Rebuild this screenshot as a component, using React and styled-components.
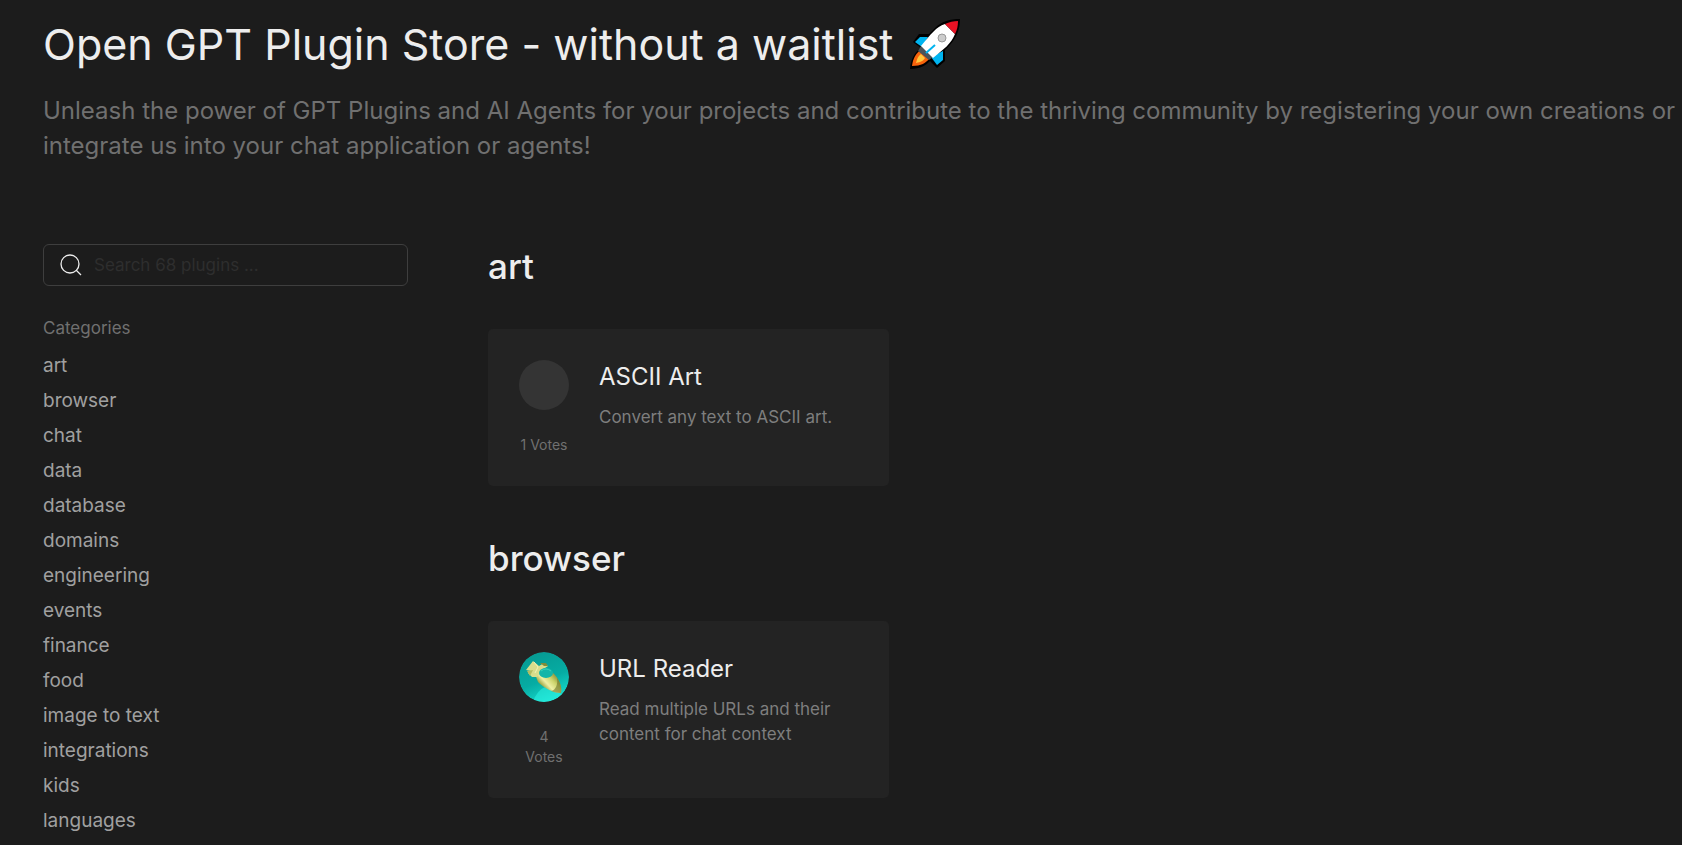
import React, { useState } from 'react'
import styled, { createGlobalStyle } from 'styled-components'

const categories = [
  'art',
  'browser',
  'chat',
  'data',
  'database',
  'domains',
  'engineering',
  'events',
  'finance',
  'food',
  'image to text',
  'integrations',
  'kids',
  'languages',
]

const sections = [
  {
    category: 'art',
    plugins: [{ name: 'ASCII Art', description: 'Convert any text to ASCII art.', votes: 1 }],
  },
  {
    category: 'browser',
    plugins: [
      {
        name: 'URL Reader',
        description: 'Read multiple URLs and their content for chat context',
        votes: 4,
        logo: true,
      },
    ],
  },
]

function RocketIcon() {
  return (
    <Rocket viewBox='0 0 52 52' role='img' aria-label='rocket'>
      <path
        d='M51 1C41 1 33 3 26 10L20 16H10L4 24L12 30C8 33 2 38 1 51C12 51 17 47 21 43L28 50L36 43V32L40 28C48 19 51 11 51 1Z'
        fill='#000'
      />
      <path d='M19 19H11L6 24L13 29ZM34 33V42L28 47L22 39Z' fill='#00b4f0' />
      <path d='M13 31C7 35 4 40 3 48C12 48 17 45 21 40Z' fill='#f7630c' />
      <path d='M12 36C9 38 8 41 7 45C12 44 14 43 16 40Z' fill='#ffc83d' />
      <path d='M12 28L24 39L20 42L9 33Z' fill='#4a5459' />
      <path d='M36 6C27 9 22 16 12 28L24 40C35 31 42 26 46 16Z' fill='#fff' />
      <path d='M36 6C40 4 45 3 49 3C49 8 48 12 46 16Z' fill='#e81224' />
      <circle cx='33' cy='20' r='4' fill='#ccc' stroke='#999' />
      <path d='M17 35L26 27' stroke='#00b4f0' strokeWidth='2' />
    </Rocket>
  )
}

function SearchIcon() {
  return (
    <Magnifier viewBox='0 0 22 22' aria-hidden='true'>
      <circle cx='10' cy='10' r='9' />
      <path d='M16 16L21 21' />
    </Magnifier>
  )
}

function ReaderLogo() {
  return (
    <svg viewBox='0 0 50 50' width='50' height='50' aria-hidden='true'>
      <defs>
        <linearGradient id='sea' x1='.3' y1='0' x2='.7' y2='1'>
          <stop offset='0' stopColor='#069a92' />
          <stop offset='.55' stopColor='#06aca3' />
          <stop offset='1' stopColor='#18e0d2' />
        </linearGradient>
        <linearGradient id='hull' gradientUnits='userSpaceOnUse' x1='38' y1='24' x2='25' y2='36'>
          <stop offset='0' stopColor='#8d9238' />
          <stop offset='.35' stopColor='#cdd46c' />
          <stop offset='.7' stopColor='#eef0a6' />
          <stop offset='1' stopColor='#9da646' />
        </linearGradient>
      </defs>
      <circle cx='25' cy='25' r='25' fill='url(#sea)' />
      <path d='M14 50Q18 38 26 35L43 42Q34 50 25 50Z' fill='#2ff8e8' opacity='.5' />
      <path d='M16 22C22 17 31 17 36 23C41 29 43 35 42 41C34 41 25 36 19 30Z' fill='url(#hull)' />
      <path d='M38 26C42 31 43 37 42 41C38 41 35 40 32 39C37 38 39 32 38 26Z' fill='#6e7329' opacity='.6' />
      <path d='M14 9L20 14L25 11L29 14L23 18L18 25L13 25L9 21L12 19L7 18Z' fill='#d8dd8c' />
      <path d='M21 11L27 11L29 14L25 14Z' fill='#818c39' />
      <path d='M8 19L14 18L11 24Z' fill='#b4bc62' />
      <path d='M15 10L19 15L16 21' fill='none' stroke='#f0f2b4' />
      <ellipse cx='27' cy='21' rx='7' ry='5' fill='#14b5a9' />
      <path d='M22 19Q27 15 32 19' fill='none' stroke='#36d3bb' />
    </svg>
  )
}

function PluginCard({ plugin }) {
  return (
    <Card href='#plugin'>
      <Aside>
        <Avatar>{plugin.logo && <ReaderLogo />}</Avatar>
        <Votes>
          <span>{plugin.votes}</span> <span>Votes</span>
        </Votes>
      </Aside>
      <CardBody>
        <CardTitle>{plugin.name}</CardTitle>
        <CardText>{plugin.description}</CardText>
      </CardBody>
    </Card>
  )
}

function App() {
  const [search, setSearch] = useState('')

  return (
    <Page>
      <GlobalStyle />
      <Header>
        <Title>
          Open GPT Plugin Store - without a waitlist <RocketIcon />
        </Title>
        <Lead>
          Unleash the power of GPT Plugins and AI Agents for your projects and contribute to the
          thriving community by registering your own creations or integrate us into your chat
          application or agents!
        </Lead>
      </Header>
      <Layout>
        <Sidebar>
          <SearchBox>
            <SearchIcon />
            <SearchInput
              type='text'
              aria-label='Search plugins'
              placeholder='Search 68 plugins ...'
              value={search}
              onChange={(e) => setSearch(e.target.value)}
            />
          </SearchBox>
          <SidebarTitle>Categories</SidebarTitle>
          <CategoryList>
            {categories.map((category) => (
              <li key={category}>
                <CategoryLink href={`#${category}`}>{category}</CategoryLink>
              </li>
            ))}
          </CategoryList>
        </Sidebar>
        <Content>
          {sections.map((section) => (
            <section key={section.category} id={section.category}>
              <SectionTitle>{section.category}</SectionTitle>
              <CardGrid>
                {section.plugins.map((plugin) => (
                  <PluginCard key={plugin.name} plugin={plugin} />
                ))}
              </CardGrid>
            </section>
          ))}
        </Content>
      </Layout>
    </Page>
  )
}

export default App

const GlobalStyle = createGlobalStyle`
  * {
    box-sizing: border-box;
    margin: 0;
    padding: 0;
  }
  body {
    background: #1c1c1c;
    color: #ededed;
    font-family: Inter, 'Liberation Sans', sans-serif;
  }
`

const Page = styled.main`
  min-height: 100vh;
  padding: 14px 0 0 43px;
`

const Header = styled.header`
  margin-bottom: 81px;
`

const Title = styled.h1`
  display: flex;
  align-items: center;
  gap: 16px;
  font-size: 43px;
  line-height: 60px;
  font-weight: 400;
  margin-bottom: 19px;
`

const Rocket = styled.svg`
  flex: none;
  width: 52px;
  height: 52px;
`

const Lead = styled.p`
  font-size: 24px;
  line-height: 35px;
  color: #707070;
`

const Layout = styled.div`
  display: grid;
  grid-template-columns: 365px 1fr;
  gap: 80px;
`

const Sidebar = styled.aside`
  min-width: 0;
`

const SearchBox = styled.div`
  display: flex;
  align-items: center;
  gap: 12px;
  height: 42px;
  padding: 0 16px;
  margin-bottom: 30px;
  border: 1px solid #3e3e3e;
  border-radius: 6px;
`

const Magnifier = styled.svg`
  flex: none;
  width: 22px;
  height: 22px;
  fill: none;
  stroke: #ededed;
  stroke-width: 1.3;
`

const SearchInput = styled.input`
  flex: 1;
  min-width: 0;
  border: 0;
  outline: 0;
  background: transparent;
  color: #ededed;
  font: inherit;
  font-size: 17px;
  &::placeholder {
    color: #2e2e2e;
    opacity: 1;
  }
`

const SidebarTitle = styled.h2`
  font-size: 17px;
  line-height: 25px;
  font-weight: 400;
  color: #707070;
  margin-bottom: 7px;
`

const CategoryList = styled.ul`
  list-style: none;
`

const CategoryLink = styled.a`
  display: block;
  font-size: 19px;
  line-height: 35px;
  color: #a0a0a0;
  text-decoration: none;
`

const Content = styled.div`
  display: flex;
  flex-direction: column;
  gap: 50px;
`

const SectionTitle = styled.h2`
  font-size: 35px;
  line-height: 45px;
  font-weight: 500;
  margin-bottom: 40px;
`

const CardGrid = styled.div`
  display: grid;
  grid-template-columns: repeat(auto-fill, minmax(360px, 401px));
  gap: 24px;
`

const Card = styled.a`
  display: flex;
  gap: 30px;
  padding: 31px;
  border-radius: 5px;
  background: #232323;
  color: #ededed;
  text-decoration: none;
`

const Aside = styled.div`
  flex: none;
  width: 50px;
  text-align: center;
`

const Avatar = styled.div`
  width: 50px;
  height: 50px;
  margin-bottom: 25px;
  border-radius: 50%;
  overflow: hidden;
  background: #343434;
`

const Votes = styled.p`
  font-size: 14px;
  line-height: 20px;
  color: #707070;
`

const CardBody = styled.div`
  min-width: 0;
`

const CardTitle = styled.h3`
  font-size: 24px;
  line-height: 34px;
  font-weight: 400;
  margin-bottom: 11px;
`

const CardText = styled.p`
  font-size: 17px;
  line-height: 25px;
  color: #7e7e7e;
`
